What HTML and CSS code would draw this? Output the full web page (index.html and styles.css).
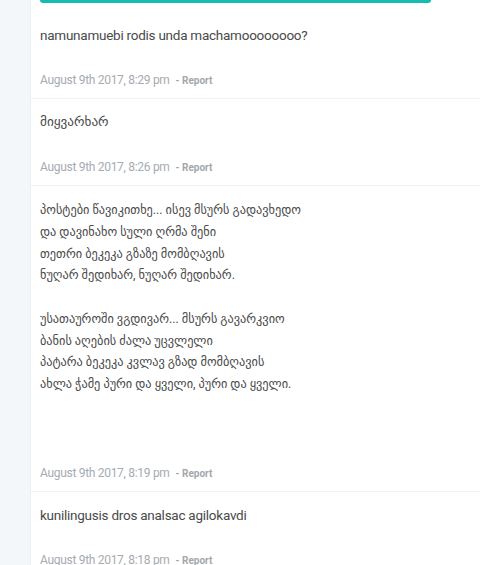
FILE: index.html
```html
<!DOCTYPE html>
<html>
<head>
<meta charset="utf-8">
<link rel="stylesheet" href="styles.css">
</head>
<body>
<div class="page">
  <aside class="sidebar"></aside>
  <main class="content">
    <div class="topbar"></div>
    <div class="comment">
      <p class="text">namunamuebi rodis unda machamoooooooo?</p>
      <div class="meta"><span class="date">August 9th 2017, 8:29 pm</span><span class="report">- Report</span></div>
    </div>
    <div class="comment">
      <p class="text geo">მიყვარხარ</p>
      <div class="meta"><span class="date">August 9th 2017, 8:26 pm</span><span class="report">- Report</span></div>
    </div>
    <div class="comment">
      <p class="text poem">პოსტები წავიკითხე... ისევ მსურს გადავხედო<br>და დავინახო სული ღრმა შენი<br>თეთრი ბეკეკა გზაზე მომბღავის<br>ნუღარ შედიხარ, ნუღარ შედიხარ.<br><br>უსათაუროში ვგდივარ... მსურს გავარკვიო<br>ბანის აღების ძალა უცვლელი<br>პატარა ბეკეკა კვლავ გზად მომბღავის<br>ახლა ჭამე პური და ყველი, პური და ყველი.<br><br><br></p>
      <div class="meta"><span class="date">August 9th 2017, 8:19 pm</span><span class="report">- Report</span></div>
    </div>
    <div class="comment">
      <p class="text">kunilingusis dros analsac agilokavdi</p>
      <div class="meta"><span class="date">August 9th 2017, 8:18 pm</span><span class="report">- Report</span></div>
    </div>
  </main>
</div>
</body>
</html>
```
FILE: styles.css
```css
html, body {
  margin: 0;
  padding: 0;
  background: #ffffff;
  font-family: Roboto, "DejaVu Sans", sans-serif;
}
.page {
  display: flex;
  min-height: 565px;
}
.sidebar {
  width: 30px;
  flex: 0 0 30px;
  background: #f3f7fa;
  border-right: 1px solid #e6f3f5;
}
.content {
  flex: 1;
  padding-left: 9px;
}
.topbar {
  width: 391px;
  height: 3px;
  background: #16bbb1;
  border-radius: 0 0 4px 4px;
  margin-bottom: 9px;
}
.comment {
  padding: 12px 0 10px;
  border-bottom: 1px solid #eaf5f6;
  margin-left: -9px;
  padding-left: 9px;
}
.text {
  margin: 0;
  font-size: 13.5px;
  letter-spacing: -0.25px;
  line-height: 22px;
  color: #4a4a4a;
}
.geo {
  font-size: 13.2px;
  letter-spacing: 0;
}
.poem {
  font-size: 12.3px;
  letter-spacing: 0;
  line-height: 21.75px;
  padding-top: 2px;
}
.meta {
  margin-top: 24px;
  line-height: 18px;
  height: 18px;
}
.date {
  font-size: 12px;
  letter-spacing: -0.3px;
  color: #a5abb3;
}
.report {
  font-size: 10px;
  font-weight: 700;
  color: #a3a7ad;
  margin-left: 6px;
}
```
